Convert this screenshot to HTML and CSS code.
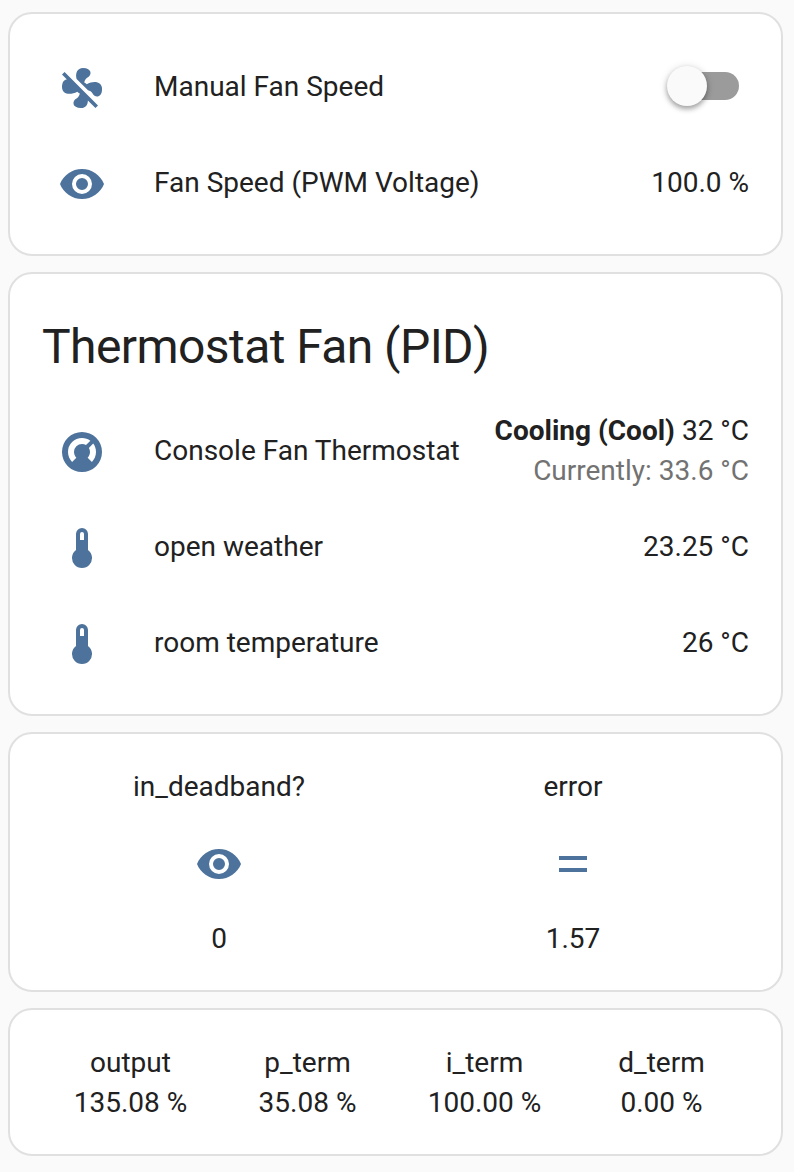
FILE: index.html
```html
<!DOCTYPE html>
<html lang="en">
<head>
<meta charset="utf-8">
<title>Fan control</title>
<link rel="stylesheet" href="styles.css">
</head>
<body>
<svg class="symbols" aria-hidden="true">
  <symbol id="fan-off" viewBox="0 0 24 24"><path d="M12.5,2C9.64,2 8.57,4.55 9.29,7.47L15,13.16C15.87,13.37 16.81,13.81 17.28,14.73C18.46,17.1 22.03,17 22.03,12.5C22.03,8.92 18.05,8.13 14.35,10.13C14.03,9.73 13.61,9.42 13.13,9.22C13.32,8.29 13.76,7.24 14.75,6.75C17.11,5.57 17,2 12.5,2M3.28,4L2,5.27L4.47,7.73C3.22,7.74 2,8.87 2,11.5C2,15.07 5.96,15.85 9.65,13.87C9.97,14.27 10.4,14.59 10.89,14.79C10.69,15.71 10.25,16.75 9.27,17.24C6.91,18.42 7,22 11.5,22C13.8,22 14.94,20.36 14.94,18.21L18.73,22L20,20.72L3.28,4Z"/></symbol>
  <symbol id="eye" viewBox="0 0 24 24"><path d="M12,9A3,3 0 0,0 9,12A3,3 0 0,0 12,15A3,3 0 0,0 15,12A3,3 0 0,0 12,9M12,17A5,5 0 0,1 7,12A5,5 0 0,1 12,7A5,5 0 0,1 17,12A5,5 0 0,1 12,17M12,4.5C7,4.5 2.73,7.61 1,12C2.73,16.39 7,19.5 12,19.5C17,19.5 21.27,16.39 23,12C21.27,7.61 17,4.5 12,4.5Z"/></symbol>
  <symbol id="thermostat" viewBox="0 0 24 24"><path d="M16.95,16.95L14.83,14.83C15.55,14.1 16,13.1 16,12C16,11.26 15.79,10.57 15.43,10L17.6,7.81C18.5,9 19,10.43 19,12C19,13.93 18.22,15.68 16.95,16.95M12,5C13.57,5 15,5.5 16.19,6.4L14,8.56C13.43,8.21 12.74,8 12,8A4,4 0 0,0 8,12C8,13.1 8.45,14.1 9.17,14.83L7.05,16.95C5.78,15.68 5,13.93 5,12A7,7 0 0,1 12,5M12,2A10,10 0 0,0 2,12A10,10 0 0,0 12,22A10,10 0 0,0 22,12A10,10 0 0,0 12,2Z"/></symbol>
  <symbol id="thermometer" viewBox="0 0 24 24"><path d="M15 13V5A3 3 0 0 0 9 5V13A5 5 0 1 0 15 13M12 4A1 1 0 0 1 13 5V8H11V5A1 1 0 0 1 12 4Z"/></symbol>
  <symbol id="equal" viewBox="0 0 24 24"><path d="M19,10H5V8H19V10M19,16H5V14H19V16Z"/></symbol>
</svg>
<main class="stack">
  <section class="card entities">
    <div class="row"><svg class="icon"><use href="#fan-off"/></svg><span class="name">Manual Fan Speed</span><span class="switch"><span class="thumb"></span></span></div>
    <div class="row"><svg class="icon"><use href="#eye"/></svg><span class="name">Fan Speed (PWM Voltage)</span><span class="value">100.0 %</span></div>
  </section>
  <section class="card entities thermostat">
    <h1 class="title">Thermostat Fan (PID)</h1>
    <div class="row"><svg class="icon"><use href="#thermostat"/></svg><span class="name">Console Fan Thermostat</span><div class="value"><div><b>Cooling (Cool)</b> 32 °C</div><div class="current">Currently: 33.6 °C</div></div></div>
    <div class="row"><svg class="icon"><use href="#thermometer"/></svg><span class="name">open weather</span><span class="value">23.25 °C</span></div>
    <div class="row"><svg class="icon"><use href="#thermometer"/></svg><span class="name">room temperature</span><span class="value">26 °C</span></div>
  </section>
  <section class="card glance glance-icons">
    <div class="cell"><span>in_deadband?</span><svg class="icon"><use href="#eye"/></svg><span>0</span></div>
    <div class="cell"><span>error</span><svg class="icon"><use href="#equal"/></svg><span>1.57</span></div>
  </section>
  <section class="card glance glance-terms">
    <div class="cell"><span>output</span><span>135.08 %</span></div>
    <div class="cell"><span>p_term</span><span>35.08 %</span></div>
    <div class="cell"><span>i_term</span><span>100.00 %</span></div>
    <div class="cell"><span>d_term</span><span>0.00 %</span></div>
  </section>
</main>
</body>
</html>
```
FILE: styles.css
```css
* { box-sizing: border-box; }
body {
  margin: 0;
  background: #fafafa;
  color: #212121;
  font: 28px/40px Roboto, sans-serif;
}
.symbols { display: none; }
.stack {
  display: flex;
  flex-direction: column;
  gap: 16px;
  width: 783px;
  height: 1172px;
  padding: 12px 0 16px 8px;
}
.card {
  background: #fff;
  border: 2px solid #e0e0e0;
  border-radius: 24px;
}
.entities {
  display: flex;
  flex-direction: column;
  gap: 16px;
  height: 244px;
  padding: 32px;
}
.row {
  display: flex;
  align-items: center;
  height: 80px;
  white-space: nowrap;
}
.icon {
  width: 48px;
  height: 48px;
  fill: #4d729b;
}
.row .icon { margin: 4px 48px 0 16px; }
.name { flex: 1; }
.name, .value { padding-top: 2px; }
.value { text-align: right; }
.switch {
  width: 72px;
  height: 40px;
  margin-right: 10px;
  padding: 6px 0;
  position: relative;
}
.switch::before {
  content: "";
  display: block;
  height: 28px;
  margin-left: 4px;
  border-radius: 14px;
  background: #9b9b9b;
}
.thumb {
  position: absolute;
  left: 0;
  top: 0;
  width: 40px;
  height: 40px;
  border-radius: 50%;
  background: #fafafa;
  box-shadow: 0 3px 5px rgba(0, 0, 0, .3), 0 1px 8px rgba(0, 0, 0, .15);
}
.thermostat { height: 444px; }
.title {
  margin: 0 0 8px;
  padding-top: 7px;
  height: 80px;
  font-size: 48px;
  line-height: 68px;
  font-weight: 400;
  letter-spacing: -.576px;
}
.current { color: #727272; }
.glance {
  display: grid;
  padding: 33px 31px 31px 32px;
}
.cell {
  display: flex;
  flex-direction: column;
  align-items: center;
}
.glance-icons {
  grid-template-columns: repeat(2, 1fr);
  height: 260px;
}
.cell .icon { margin: 33px 0 31px; }
.glance-terms {
  grid-template-columns: repeat(4, 1fr);
  height: 148px;
}
```
